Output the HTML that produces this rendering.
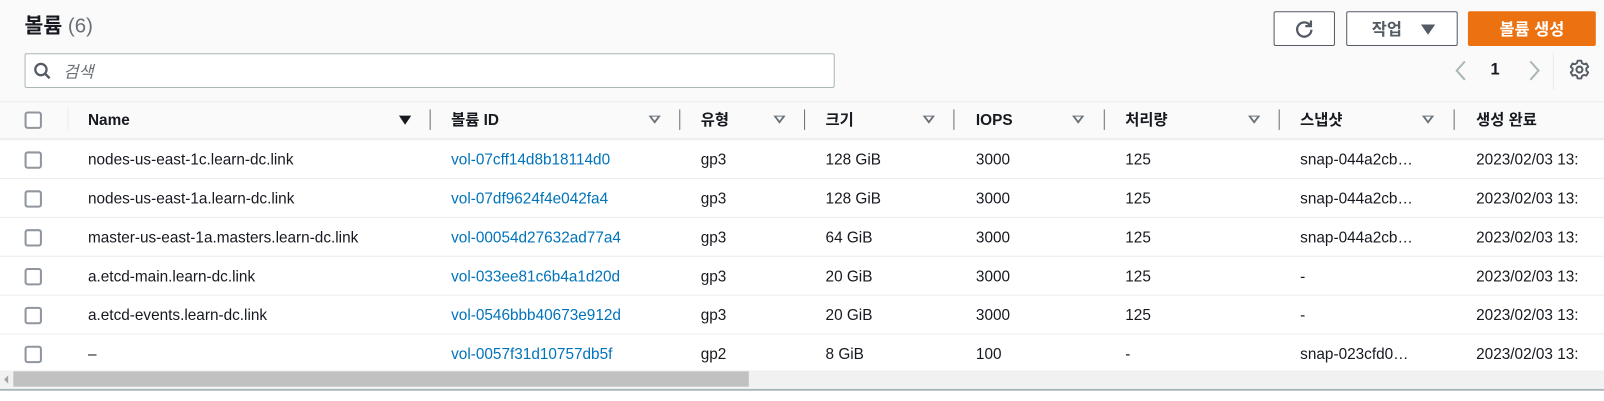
<!DOCTYPE html>
<html><head><meta charset="utf-8"><style>
*{margin:0;padding:0;box-sizing:border-box}
body{width:1604px;height:401px;overflow:hidden;background:#fff;font-family:"Liberation Sans","Noto Sans CJK KR",sans-serif;color:#16191f;position:relative}
#w{position:absolute;left:0;top:0;width:1568px;height:392px;transform:scale(1.02296);transform-origin:0 0}
.a{position:absolute;white-space:nowrap}
.top{position:absolute;left:0;top:0;width:1568px;height:137px;background:#fafafa}
.cb{position:absolute;width:17px;height:17px;border:2px solid #8f969e;border-radius:3px;background:#fff}
.hd{font-weight:bold;font-size:15px;color:#16191f;top:109px}
.ko{top:106px}
.sep{position:absolute;width:1px;height:20px;background:#687078;top:107px}
.tri{position:absolute;top:113px;width:0;height:0;border-left:6px solid transparent;border-right:6px solid transparent;border-top:8px solid #687078}
.tri::after{content:"";position:absolute;left:-3px;top:-7px;border-left:3px solid transparent;border-right:3px solid transparent;border-top:4px solid #fafafa}
.row{position:absolute;left:0;width:1568px;height:38px;border-bottom:1px solid #eaeded;font-size:15px}
.row .a{top:11px}
.lk{color:#0073bb}
.btn{position:absolute;top:11px;height:34px;border:1px solid #545b64;border-radius:2px;background:#fff}
</style></head><body><div id="w">
<div class="top"></div>
<div class="a" style="left:24px;top:9px;font-size:20px;font-weight:bold">볼륨 <span style="font-weight:normal;color:#687078">(6)</span></div>
<div class="a" style="left:24px;top:52px;width:792px;height:34px;border:1px solid #aab7b8;border-radius:2px;background:#fff"></div>
<svg class="a" style="left:32px;top:60px" width="20" height="20" viewBox="0 0 20 20"><circle cx="8" cy="8" r="5.5" fill="none" stroke="#545b64" stroke-width="2.2"/><line x1="12" y1="12" x2="16.5" y2="16.5" stroke="#545b64" stroke-width="2.4"/></svg>
<div class="a" style="left:62px;top:57px;font-size:16px;font-style:italic;color:#687078">검색</div>

<div class="btn" style="left:1245px;width:60px"></div>
<svg class="a" style="left:1264px;top:17px" width="22" height="22" viewBox="0 0 22 22"><path d="M16.5 7.5A7 7 0 1 0 18 12" fill="none" stroke="#545b64" stroke-width="2.2"/><path d="M17.5 3v5.5H12" fill="none" stroke="#545b64" stroke-width="2.2"/></svg>
<div class="btn" style="left:1316px;width:109px"></div>
<div class="a" style="left:1341px;top:15px;font-size:16px;font-weight:bold;color:#545b64">작업</div>
<div class="a" style="left:1389px;top:24px;border-left:7px solid transparent;border-right:7px solid transparent;border-top:10px solid #545b64"></div>
<div class="a" style="left:1435px;top:11px;width:125px;height:34px;background:#ec7211;border-radius:2px"></div>
<div class="a" style="left:1435px;top:15px;width:125px;color:#fff;font-weight:bold;font-size:16px;text-align:center">볼륨 생성</div>

<svg class="a" style="left:1420px;top:56px" width="100" height="26" viewBox="0 0 100 26"><path d="M12 4L4 13l8 9" fill="none" stroke="#aab7b8" stroke-width="2"/><path d="M76 4l8 9-8 9" fill="none" stroke="#aab7b8" stroke-width="2"/></svg>
<div class="a" style="left:1457px;top:60px;font-size:16px;font-weight:bold">1</div>
<div class="a" style="left:1518px;top:52px;width:1px;height:36px;background:#eaeded"></div>
<svg class="a" style="left:1533px;top:57px" width="22" height="22" viewBox="0 0 24 24"><circle cx="12" cy="12" r="3.2" fill="none" stroke="#545b64" stroke-width="2.2"/><path d="M10 2.5h4l.6 2.6 2.1 1.2 2.6-.8 2 3.5-2 1.8v2.4l2 1.8-2 3.5-2.6-.8-2.1 1.2-.6 2.6h-4l-.6-2.6-2.1-1.2-2.6.8-2-3.5 2-1.8v-2.4l-2-1.8 2-3.5 2.6.8 2.1-1.2z" fill="none" stroke="#545b64" stroke-width="2" stroke-linejoin="round"/></svg>

<div class="a" style="left:0;top:99px;width:1568px;height:1px;background:#eaeded"></div>
<div class="a" style="left:0;top:135px;width:1568px;height:3px;background:linear-gradient(#e4e6e8,#fff)"></div>
<div class="cb" style="left:24px;top:109px"></div>
<div class="a" style="left:66px;top:106px;width:1px;height:22px;background:#eaeded"></div>
<div class="a hd" style="left:86px">Name</div>
<div class="a" style="left:390px;top:113px;border-left:6px solid transparent;border-right:6px solid transparent;border-top:9px solid #16191f"></div>
<div class="sep" style="left:420px"></div>
<div class="a hd ko" style="left:441px">볼륨 ID</div>
<div class="tri" style="left:634px"></div><div class="sep" style="left:664px"></div>
<div class="a hd ko" style="left:685px">유형</div>
<div class="tri" style="left:756px"></div><div class="sep" style="left:786px"></div>
<div class="a hd ko" style="left:807px">크기</div>
<div class="tri" style="left:902px"></div><div class="sep" style="left:932px"></div>
<div class="a hd" style="left:954px">IOPS</div>
<div class="tri" style="left:1048px"></div><div class="sep" style="left:1079px"></div>
<div class="a hd ko" style="left:1100px">처리량</div>
<div class="tri" style="left:1220px"></div><div class="sep" style="left:1250px"></div>
<div class="a hd ko" style="left:1271px">스냅샷</div>
<div class="tri" style="left:1390px"></div><div class="sep" style="left:1421px"></div>
<div class="a hd ko" style="left:1443px">생성 완료</div>

<div class="row" style="top:137px"><div class="cb" style="left:24px;top:11px"></div><div class="a" style="left:86px">nodes-us-east-1c.learn-dc.link</div><div class="a lk" style="left:441px">vol-07cff14d8b18114d0</div><div class="a" style="left:685px">gp3</div><div class="a" style="left:807px">128 GiB</div><div class="a" style="left:954px">3000</div><div class="a" style="left:1100px">125</div><div class="a" style="left:1271px">snap-044a2cb…</div><div class="a" style="left:1443px">2023/02/03 13:</div></div>
<div class="row" style="top:175px"><div class="cb" style="left:24px;top:11px"></div><div class="a" style="left:86px">nodes-us-east-1a.learn-dc.link</div><div class="a lk" style="left:441px">vol-07df9624f4e042fa4</div><div class="a" style="left:685px">gp3</div><div class="a" style="left:807px">128 GiB</div><div class="a" style="left:954px">3000</div><div class="a" style="left:1100px">125</div><div class="a" style="left:1271px">snap-044a2cb…</div><div class="a" style="left:1443px">2023/02/03 13:</div></div>
<div class="row" style="top:213px"><div class="cb" style="left:24px;top:11px"></div><div class="a" style="left:86px">master-us-east-1a.masters.learn-dc.link</div><div class="a lk" style="left:441px">vol-00054d27632ad77a4</div><div class="a" style="left:685px">gp3</div><div class="a" style="left:807px">64 GiB</div><div class="a" style="left:954px">3000</div><div class="a" style="left:1100px">125</div><div class="a" style="left:1271px">snap-044a2cb…</div><div class="a" style="left:1443px">2023/02/03 13:</div></div>
<div class="row" style="top:251px"><div class="cb" style="left:24px;top:11px"></div><div class="a" style="left:86px">a.etcd-main.learn-dc.link</div><div class="a lk" style="left:441px">vol-033ee81c6b4a1d20d</div><div class="a" style="left:685px">gp3</div><div class="a" style="left:807px">20 GiB</div><div class="a" style="left:954px">3000</div><div class="a" style="left:1100px">125</div><div class="a" style="left:1271px">-</div><div class="a" style="left:1443px">2023/02/03 13:</div></div>
<div class="row" style="top:289px"><div class="cb" style="left:24px;top:11px"></div><div class="a" style="left:86px">a.etcd-events.learn-dc.link</div><div class="a lk" style="left:441px">vol-0546bbb40673e912d</div><div class="a" style="left:685px">gp3</div><div class="a" style="left:807px">20 GiB</div><div class="a" style="left:954px">3000</div><div class="a" style="left:1100px">125</div><div class="a" style="left:1271px">-</div><div class="a" style="left:1443px">2023/02/03 13:</div></div>
<div class="row" style="top:327px;border:none"><div class="cb" style="left:24px;top:11px"></div><div class="a" style="left:86px">–</div><div class="a lk" style="left:441px">vol-0057f31d10757db5f</div><div class="a" style="left:685px">gp2</div><div class="a" style="left:807px">8 GiB</div><div class="a" style="left:954px">100</div><div class="a" style="left:1100px">-</div><div class="a" style="left:1271px">snap-023cfd0…</div><div class="a" style="left:1443px">2023/02/03 13:</div></div>

<div class="a" style="left:0;top:362px;width:1568px;height:17px;background:#f1f1f1"></div>
<div class="a" style="left:4px;top:367px;border-top:4px solid transparent;border-bottom:4px solid transparent;border-right:4px solid #a3a3a3"></div>
<div class="a" style="left:13px;top:363px;width:719px;height:15px;background:#c1c1c1"></div>
<div class="a" style="left:0;top:380px;width:1568px;height:2px;background:#aab7b8"></div>
</div></body></html>
